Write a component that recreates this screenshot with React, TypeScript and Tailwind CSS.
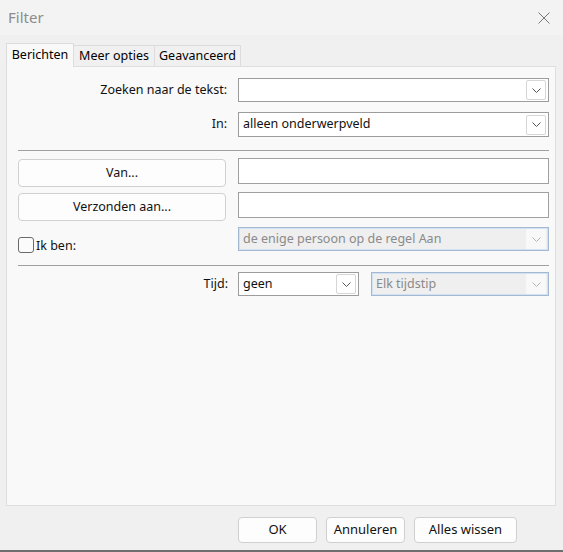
import React from "react";

function Chevron({ color = "#555" }: { color?: string }) {
  return (
    <svg width="9" height="5" viewBox="0 0 9 5" fill="none">
      <path d="M0.5 0.5 L4.5 4.5 L8.5 0.5" stroke={color} strokeWidth="1" />
    </svg>
  );
}

function Combo({ value, width, h = "h-[24px]" }: { value?: string; width?: string; h?: string }) {
  return (
    <div className={`${width ?? "flex-1"} ${h} border border-[#9c9c9c] bg-white flex items-center pl-[4px] pr-[2px]`}>
      <span className="flex-1 text-[#111]">{value}</span>
      <div className="w-[20px] h-[20px] border border-[#d6d6d6] rounded-[2px] flex items-center justify-center">
        <Chevron />
      </div>
    </div>
  );
}

function DisabledCombo({ value, width }: { value: string; width?: string }) {
  return (
    <div className={`${width ?? "flex-1"} h-[24px] border border-[#a3b8d2] bg-[#efefef] shadow-[inset_0_0_0_1px_#d3e2f3] flex items-center pl-[4px] pr-[2px]`}>
      <span className="flex-1 text-[#8a8a8a]">{value}</span>
      <div className="w-[20px] h-[20px] bg-[#f8f8f8] flex items-center justify-center">
        <Chevron color="#b5b5b5" />
      </div>
    </div>
  );
}

function Btn({ label, className }: { label: string; className: string }) {
  return (
    <div className={`${className} bg-[#fdfdfd] border border-[#d0d0d0] rounded-[4px] flex items-center justify-center text-[#111]`}>
      {label}
    </div>
  );
}

export default function App() {
  return (
    <div
      className="w-[563px] h-[552px] bg-[#f0f0f0] flex flex-col overflow-hidden text-[12.5px]"
      style={{ fontFamily: '"Noto Sans", "Open Sans", sans-serif' }}
    >
      {/* title bar */}
      <div className="h-[35px] shrink-0 bg-[#f3f3f3] flex items-center justify-between pl-[8px] pr-[13px]">
        <span className="text-[15px] text-[#8c8c8c]">Filter</span>
        <svg width="12" height="12" viewBox="0 0 12 12">
          <path d="M0.5 0.5 L11.5 11.5 M11.5 0.5 L0.5 11.5" stroke="#777" strokeWidth="1" />
        </svg>
      </div>

      {/* tabs */}
      <div className="h-[31px] shrink-0 flex items-end pl-[6px]">
        <div className="relative z-10 -mb-px h-[24px] w-[68px] bg-[#f9f9f9] border border-b-0 border-[#dcdcdc] flex items-center justify-center text-black">
          Berichten
        </div>
        <div className="h-[21px] w-[81px] border-t border-r border-[#dcdcdc] bg-[#f0f0f0] flex items-center justify-center text-black">
          Meer opties
        </div>
        <div className="h-[21px] w-[86px] border-t border-r border-[#dcdcdc] bg-[#f0f0f0] flex items-center justify-center text-black">
          Geavanceerd
        </div>
      </div>

      {/* panel */}
      <div className="ml-[6px] mr-[7px] h-[440px] shrink-0 border border-[#dedede] bg-[#f9f9f9] pl-[11px] pr-[6px] pt-[11px] flex flex-col text-[#111]">
        <div className="flex items-center">
          <span className="w-[220px] pr-[11px] text-right">Zoeken naar de tekst:</span>
          <Combo />
        </div>
        <div className="flex items-center mt-[10px]">
          <span className="w-[220px] pr-[11px] text-right">In:</span>
          <Combo value="alleen onderwerpveld" h="h-[25px]" />
        </div>

        <div className="h-px bg-[#a0a0a0] mt-[13px]" />

        <div className="flex items-start mt-[7px]">
          <Btn label="Van..." className="w-[208px] h-[28px] mt-[1px]" />
          <div className="ml-[12px] flex-1 h-[26px] border border-[#a0a0a0] bg-white" />
        </div>
        <div className="flex items-start mt-[5px]">
          <Btn label="Verzonden aan..." className="w-[208px] h-[28px] mt-[1px]" />
          <div className="ml-[12px] flex-1 h-[26px] border border-[#a0a0a0] bg-white" />
        </div>
        <div className="flex items-start mt-[6px]">
          <div className="w-[220px] h-[16px] flex items-center mt-[10px]">
            <div className="w-[16px] h-[16px] border border-[#6a6a6a] rounded-[3px] bg-[#fbfbfb]" />
            <span className="ml-[2px] leading-[16px] mt-[1px]">Ik ben:</span>
          </div>
          <DisabledCombo value="de enige persoon op de regel Aan" />
        </div>

        <div className="h-px bg-[#a0a0a0] mt-[12px]" />

        <div className="flex items-center mt-[6px]">
          <span className="w-[220px] pr-[10px] text-right">Tijd:</span>
          <Combo value="geen" width="w-[121px]" />
          <div className="w-[12px]" />
          <DisabledCombo value="Elk tijdstip" />
        </div>
      </div>

      {/* footer */}
      <div className="flex justify-end gap-[9px] pr-[46px] mt-[11px] text-[13px]">
        <Btn label="OK" className="w-[79px] h-[26px]" />
        <Btn label="Annuleren" className="w-[79px] h-[26px]" />
        <Btn label="Alles wissen" className="w-[103px] h-[26px]" />
      </div>
      <div className="flex-1" />
      <div className="h-[2px] bg-[#6e6e6e]" />
    </div>
  );
}
